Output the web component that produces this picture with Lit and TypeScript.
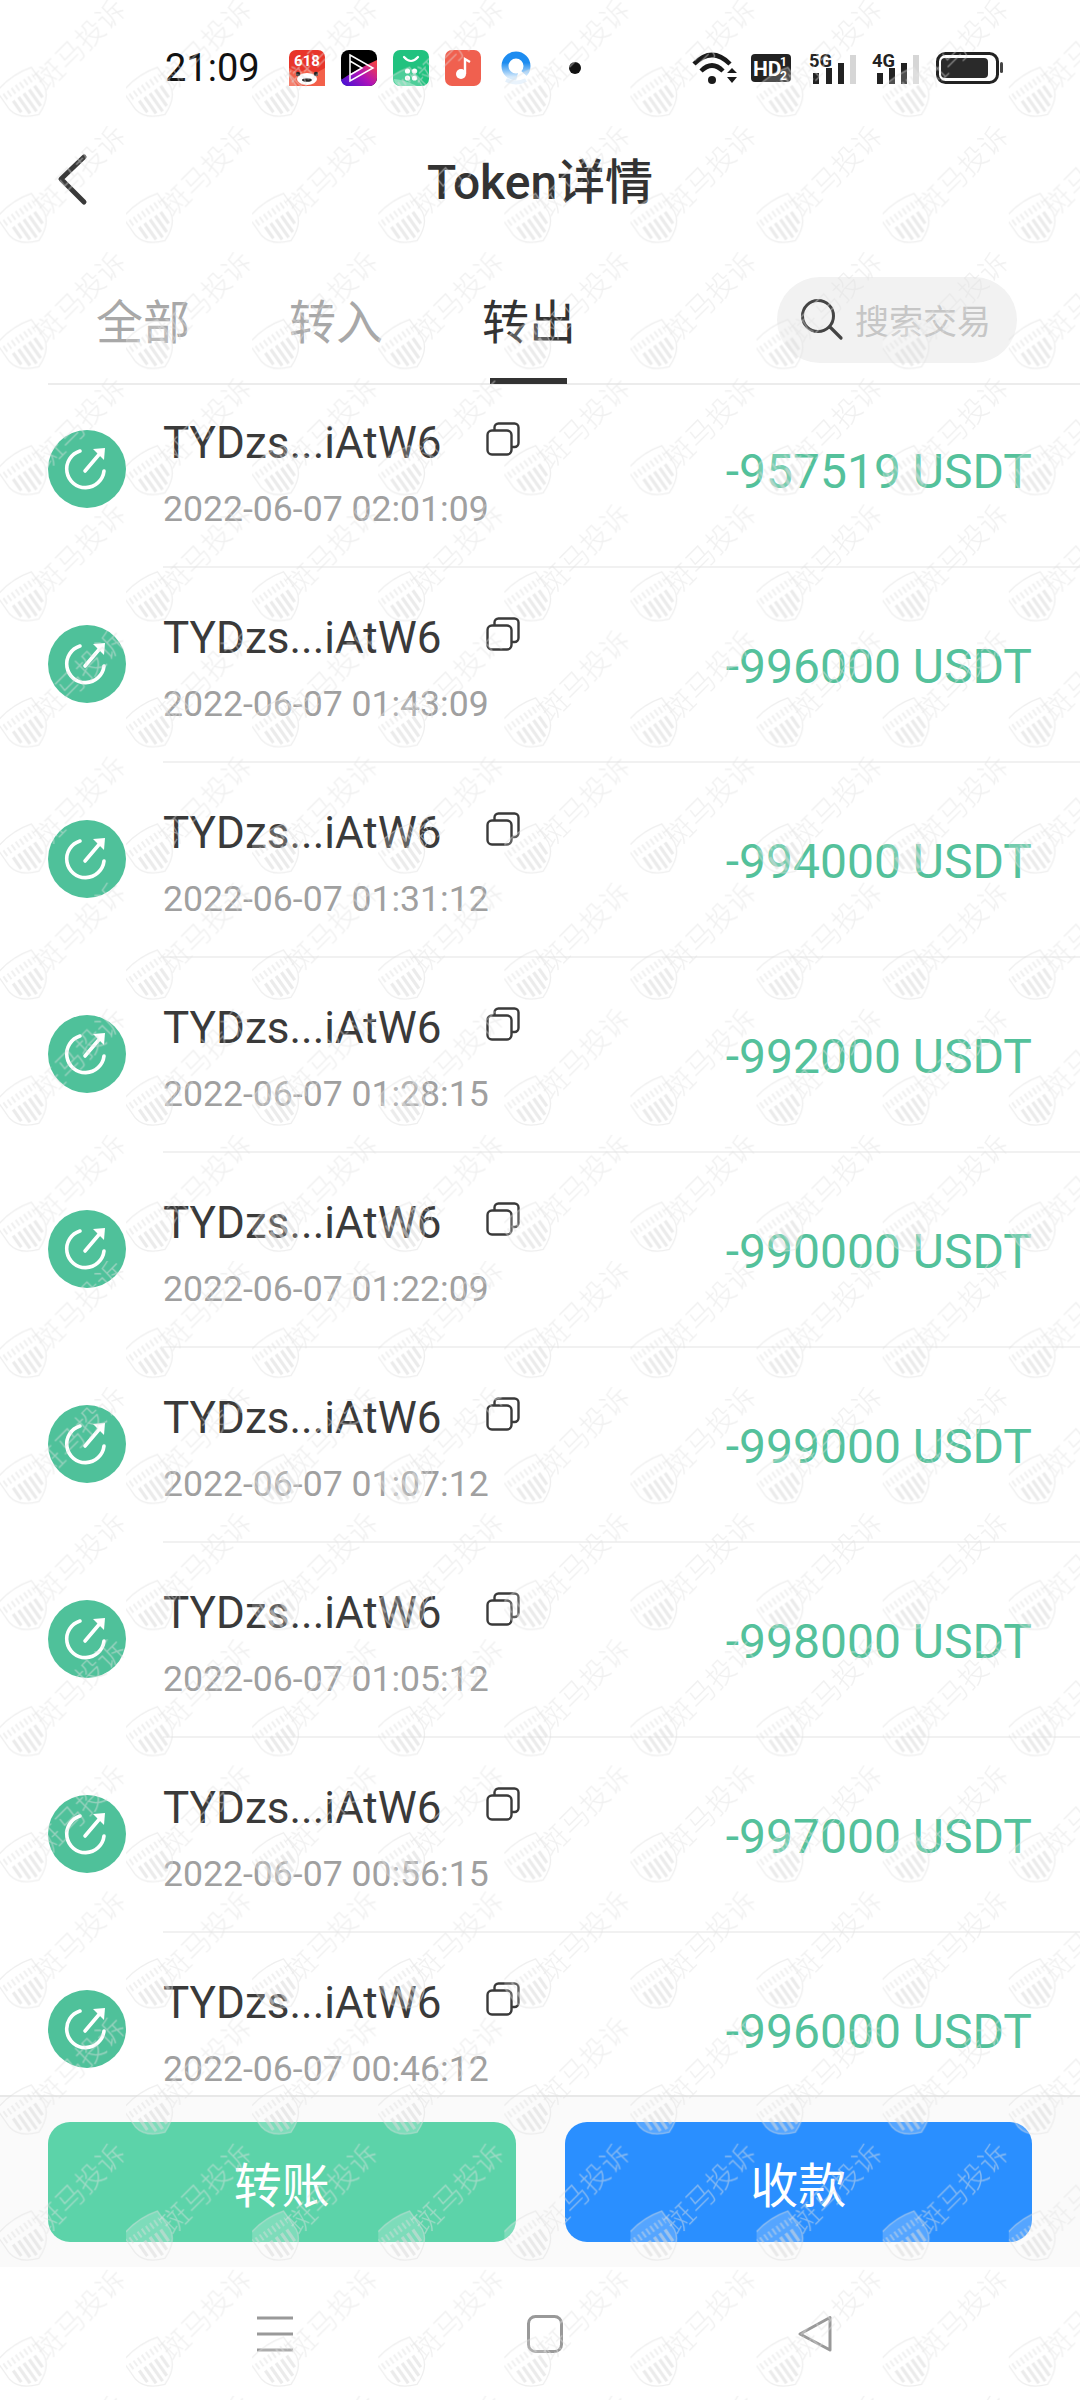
import { LitElement, html, css, svg } from 'lit';
import { customElement, state } from 'lit/decorators.js';

interface TxRow {
  time: string;
  amount: string;
}

const statusApps = svg`
  <svg width="36" height="36" viewBox="0 0 36 36">
    <rect width="36" height="36" rx="7" fill="#e8352a"/>
    <path d="M0 18 L9 23 L18 19 L27 23 L36 18 V36 H0Z" fill="#f3604a"/>
    <text x="18" y="16" text-anchor="middle" font-family="Roboto" font-weight="700" font-size="15" fill="#fff">618</text>
    <ellipse cx="18" cy="29" rx="10" ry="6" fill="#fff"/>
    <ellipse cx="18" cy="30" rx="5" ry="1.800" fill="#222"/>
    <circle cx="9" cy="24" r="2.200" fill="#222"/>
    <circle cx="27" cy="24" r="2.200" fill="#222"/>
  </svg>
  <svg width="36" height="36" viewBox="0 0 36 36">
    <defs>
      <linearGradient id="pl" x1="0" y1="1" x2="1" y2="0.2">
        <stop offset="0" stop-color="#3a12d8"/>
        <stop offset="0.55" stop-color="#b012b8"/>
        <stop offset="1" stop-color="#f0404c"/>
      </linearGradient>
    </defs>
    <rect width="36" height="36" rx="8" fill="#000"/>
    <path d="M0 30 Q14 20 36 10 V28 a8 8 0 0 1 -8 8 H8 a8 8 0 0 1 -8 -6Z" fill="url(#pl)"/>
    <path d="M9 5 L32 18 L9 31Z M9 11 L21 18 L9 25" fill="none" stroke="#fff" stroke-width="1.500"/>
  </svg>
  <svg width="36" height="36" viewBox="0 0 36 36">
    <rect width="36" height="36" rx="7" fill="#21c27f"/>
    <path d="M24 36 H8 a7 7 0 0 1 -7 -7 Q12 30 24 36Z" fill="#6ed9ac"/>
    <path d="M11 7 Q18 15 25 7" fill="none" stroke="#fff" stroke-width="2.200" stroke-linecap="round"/>
    <circle cx="14.500" cy="21" r="2.600" fill="#fff"/><circle cx="21.500" cy="21" r="2.600" fill="#fff"/>
    <circle cx="14.500" cy="28" r="2.600" fill="#fff"/><circle cx="21.500" cy="28" r="2.600" fill="#fff"/>
  </svg>
  <svg width="36" height="36" viewBox="0 0 36 36">
    <rect width="36" height="36" rx="7" fill="#f0604f"/>
    <circle cx="16" cy="24" r="5" fill="#fff"/>
    <path d="M20 24 V9 L25 12" fill="none" stroke="#fff" stroke-width="2.400"/>
  </svg>
  <svg class="q" width="32" height="34" viewBox="0 0 32 34">
    <defs>
      <linearGradient id="qr" x1="0" y1="0" x2="0" y2="1">
        <stop offset="0.35" stop-color="#1d8cf0"/>
        <stop offset="1" stop-color="#d6eafb"/>
      </linearGradient>
    </defs>
    <circle cx="16" cy="15" r="11" fill="none" stroke="url(#qr)" stroke-width="7"/>
    <path d="M19 18 L32 30 H16Z" fill="#fff"/>
    <path d="M6 29 Q16 34 26 29" fill="none" stroke="#e4f0fb" stroke-width="4"/>
  </svg>
`;

const statusRight = svg`
  <svg class="wifi" width="46" height="36" viewBox="0 0 46 36">
    <path d="M2 14 Q20 -4 38 14" fill="none" stroke="#1a1a1a" stroke-width="4.500"/>
    <path d="M9 21 Q20 10 31 21" fill="none" stroke="#1a1a1a" stroke-width="4.500"/>
    <circle cx="20" cy="30" r="4" fill="#1a1a1a"/>
    <path d="M35 23 L40 18 L45 23Z M35 27 L45 27 L40 33Z" fill="#1a1a1a"/>
  </svg>
  <svg class="hd" width="40" height="28" viewBox="0 0 40 28">
    <rect width="40" height="28" rx="4" fill="#222"/>
    <text x="2" y="22" font-family="Roboto" font-weight="700" font-size="21" fill="#fff">HD</text>
    <text x="29" y="12" font-family="Roboto" font-weight="700" font-size="12" fill="#fff">1</text>
    <text x="29" y="26" font-family="Roboto" font-weight="700" font-size="12" fill="#fff">2</text>
  </svg>
  <svg class="five" width="48" height="34" viewBox="0 0 48 34">
    <text x="0" y="16" font-family="Roboto" font-weight="700" font-size="19" textLength="23" lengthAdjust="spacingAndGlyphs" fill="#222">5G</text>
    <rect x="4" y="22" width="6" height="11" fill="#222"/>
    <rect x="17" y="17" width="6" height="16" fill="#222"/>
    <rect x="29" y="12" width="6" height="21" fill="#222"/>
    <rect x="41" y="4" width="6" height="29" fill="#d6d6d6"/>
  </svg>
  <svg class="four" width="48" height="34" viewBox="0 0 48 34">
    <text x="0" y="16" font-family="Roboto" font-weight="700" font-size="19" textLength="23" lengthAdjust="spacingAndGlyphs" fill="#222">4G</text>
    <rect x="5" y="22" width="6" height="11" fill="#222"/>
    <rect x="17" y="17" width="6" height="16" fill="#222"/>
    <rect x="29" y="12" width="6" height="21" fill="#222"/>
    <rect x="41" y="4" width="6" height="29" fill="#d6d6d6"/>
  </svg>
  <svg class="battery" width="68" height="32" viewBox="0 0 68 32">
    <rect x="1.500" y="1.500" width="60" height="29" rx="8" fill="none" stroke="#222" stroke-width="3"/>
    <rect x="5" y="6" width="47" height="20" rx="4" fill="#2a2a2a"/>
    <rect x="64" y="10" width="3" height="11" rx="1.500" fill="#444"/>
  </svg>
`;

const txIcon = svg`
  <svg class="tx-icon" width="78" height="78" viewBox="0 0 78 78">
    <circle cx="39" cy="39" r="39" fill="#4fc19a"/>
    <path d="M32 21 A18.700 18.700 0 1 0 56 41" fill="none" stroke="#fff" stroke-width="3.600" stroke-linecap="round"/>
    <path d="M37 41 L54 21" fill="none" stroke="#fff" stroke-width="3.600" stroke-linecap="round"/>
    <path d="M45 19 L57 18 L56 30Z" fill="#fff"/>
  </svg>
`;

const copyIcon = svg`
  <svg class="copy" width="34" height="34" viewBox="0 0 34 34">
    <rect x="1.500" y="8.500" width="24" height="24" rx="4.500" fill="none" stroke="#3a3a3a" stroke-width="2.400"/>
    <path d="M8.500 8 V5.500 a4 4 0 0 1 4 -4 H28.500 a4 4 0 0 1 4 4 V21 a4 4 0 0 1 -4 4 H26" fill="none" stroke="#3a3a3a" stroke-width="2.400"/>
  </svg>
`;

// the complaint site's stamp, tiled over the whole screenshot
const watermark = svg`
  <svg class="watermark" width="1080" height="2400" viewBox="0 0 1080 2400">
    <defs>
      <pattern id="wm" width="126.100" height="126.100" patternUnits="userSpaceOnUse">
        <g transform="translate(25 95) rotate(-35)">
          <path d="M-21 -19 Q0 -25 21 -19 V3 Q19 17 0 24 Q-19 17 -21 3Z" fill="rgba(255,255,255,.2)" stroke="rgba(222,222,222,.5)" stroke-width="1.300"/>
          <path d="M-18 -10 H18" stroke="rgba(222,222,222,.45)" stroke-width="7" stroke-dasharray="2 3"/>
          <path d="M-13 -2 V12 M-6.500 -2 V18 M0 -2 V20 M6.500 -2 V18 M13 -2 V12" stroke="rgba(218,218,218,.55)" stroke-width="3.200"/>
        </g>
        <text transform="translate(47 92) rotate(-45)" font-family="'Noto Sans CJK SC'" font-weight="300" font-size="28.500" fill="rgba(225,225,225,.5)">斑马投诉</text>
      </pattern>
    </defs>
    <rect width="1080" height="2400" fill="url(#wm)"/>
  </svg>
`;

@customElement('app-root')
export class AppRoot extends LitElement {
  static styles = css`
    :host {
      display: block;
      width: 1080px;
      height: 2400px;
      position: relative;
      overflow: hidden;
      background: #fff;
      font-family: Roboto, 'Noto Sans CJK SC', sans-serif;
      color: #333;
    }
    .page {
      height: 100%;
      display: flex;
      flex-direction: column;
    }
    .status {
      flex: none;
      height: 136px;
      display: flex;
      align-items: center;
      padding: 0 76px 0 165px;
      box-sizing: border-box;
    }
    .time {
      font-size: 38px;
      color: #111;
      width: 124px;
      line-height: 1;
    }
    .apps {
      display: flex;
      align-items: center;
      gap: 16px;
    }
    .apps svg {
      display: block;
    }
    .apps .q {
      margin-left: 3px;
    }
    .dot {
      width: 12px;
      height: 12px;
      border-radius: 50%;
      background: #111;
      margin-left: 37px;
    }
    .sys {
      margin-left: auto;
      display: flex;
      align-items: center;
    }
    .sys svg {
      display: block;
    }
    .sys .hd {
      margin-left: 13px;
    }
    .sys .five {
      margin-left: 18px;
    }
    .sys .four {
      margin-left: 15px;
    }
    .sys .battery {
      margin-left: 16px;
    }
    .header {
      flex: none;
      height: 84px;
      padding-bottom: 40px;
      display: flex;
      align-items: center;
      justify-content: center;
      position: relative;
    }
    .back {
      position: absolute;
      left: 56px;
      top: 17px;
    }
    .title {
      font-size: 48px;
      font-weight: 500;
      color: #333;
    }
    .tabs {
      flex: none;
      height: 125px;
      box-sizing: border-box;
      margin-left: 48px;
      padding: 0 63px 0 48px;
      border-bottom: 2px solid #ececec;
      display: flex;
      align-items: center;
      gap: 99px;
    }
    .tab {
      position: relative;
      font-size: 47px;
      color: #a8a8a8;
      align-self: stretch;
      display: flex;
      align-items: center;
      padding-bottom: 6px;
    }
    .tab.active {
      color: #333;
    }
    .tab.active::after {
      content: '';
      position: absolute;
      left: 8px;
      right: 9px;
      bottom: -1px;
      height: 6px;
      background: #333;
    }
    .search {
      margin-left: auto;
      width: 240px;
      height: 86px;
      margin-bottom: 4px;
      border-radius: 43px;
      background: #f2f2f2;
      display: flex;
      align-items: center;
      box-sizing: border-box;
      padding-left: 22px;
      gap: 10px;
      font-size: 34px;
      color: #c6c6c6;
    }
    .search svg {
      display: block;
      flex: none;
    }
    .list {
      flex: 1;
      min-height: 0;
      overflow: hidden;
      margin-top: -12px;
    }
    .row {
      height: 195px;
      display: flex;
      padding-left: 48px;
    }
    .tx-icon {
      display: block;
      flex: none;
      margin-top: 57px;
    }
    .body {
      flex: 1;
      margin-left: 37px;
      display: flex;
      justify-content: space-between;
      align-items: center;
      padding-top: 8px;
      padding-bottom: 6px;
      box-sizing: border-box;
      border-bottom: 2px solid #f1f1f1;
    }
    .info {
      display: flex;
      flex-direction: column;
      padding-top: 6px;
    }
    .addr-line {
      display: flex;
      align-items: center;
      line-height: 60px;
      font-size: 44px;
      color: #3a3a3a;
    }
    .copy {
      display: block;
      margin-left: 45px;
      margin-top: -8px;
    }
    .date {
      font-size: 35.600px;
      line-height: 50px;
      margin-top: 11px;
      color: #a0a0a0;
    }
    .amount {
      font-size: 48px;
      color: #54c19b;
      margin-right: 48px;
      padding-top: 2px;
    }
    .actions {
      flex: none;
      height: 172px;
      box-sizing: border-box;
      background: #fafafa;
      border-top: 2px solid #e8e8e8;
      padding: 25px 48px 0;
      display: flex;
      gap: 49px;
    }
    .btn {
      flex: 1;
      height: 120px;
      border-radius: 22px;
      display: flex;
      align-items: center;
      justify-content: center;
      color: #fff;
      font-size: 48px;
    }
    .btn.send {
      background: #5cd3a9;
    }
    .btn.receive {
      background: #2a8fff;
    }
    .nav {
      flex: none;
      height: 133px;
      background: #fff;
      display: flex;
      justify-content: center;
      align-items: flex-start;
      padding: 48px 0 0 10px;
      box-sizing: border-box;
    }
    .nav-item {
      flex: 0 0 270px;
      display: flex;
      justify-content: center;
    }
    .nav-item svg {
      display: block;
    }
    .watermark {
      position: absolute;
      left: 0;
      top: 0;
      pointer-events: none;
    }
  `;

  @state()
  private _rows: TxRow[] = [
    { time: '2022-06-07 02:01:09', amount: '-957519 USDT' },
    { time: '2022-06-07 01:43:09', amount: '-996000 USDT' },
    { time: '2022-06-07 01:31:12', amount: '-994000 USDT' },
    { time: '2022-06-07 01:28:15', amount: '-992000 USDT' },
    { time: '2022-06-07 01:22:09', amount: '-990000 USDT' },
    { time: '2022-06-07 01:07:12', amount: '-999000 USDT' },
    { time: '2022-06-07 01:05:12', amount: '-998000 USDT' },
    { time: '2022-06-07 00:56:15', amount: '-997000 USDT' },
    { time: '2022-06-07 00:46:12', amount: '-996000 USDT' },
  ];

  render() {
    return html`
      <div class="page">
        <div class="status">
          <span class="time">21:09</span>
          <div class="apps">${statusApps}</div>
          <span class="dot"></span>
          <div class="sys">${statusRight}</div>
        </div>

        <div class="header">
          <svg class="back" width="34" height="54" viewBox="0 0 34 54">
            <path d="M28 4 L5 26 L28 49" fill="none" stroke="#3a3a3a" stroke-width="5" stroke-linecap="round" stroke-linejoin="round"/>
          </svg>
          <span class="title">Token详情</span>
        </div>

        <div class="tabs">
          <span class="tab">全部</span>
          <span class="tab">转入</span>
          <span class="tab active">转出</span>
          <div class="search">
            <svg width="46" height="46" viewBox="0 0 46 46">
              <circle cx="19" cy="19" r="15.500" fill="none" stroke="#444" stroke-width="3"/>
              <path d="M31 30 L42 41" stroke="#444" stroke-width="3.200" stroke-linecap="round"/>
            </svg>
            <span>搜索交易</span>
          </div>
        </div>

        <div class="list">
          ${this._rows.map(
            (row) => html`
              <div class="row">
                ${txIcon}
                <div class="body">
                  <div class="info">
                    <div class="addr-line"><span>TYDzs...iAtW6</span>${copyIcon}</div>
                    <span class="date">${row.time}</span>
                  </div>
                  <span class="amount">${row.amount}</span>
                </div>
              </div>
            `
          )}
        </div>

        <div class="actions">
          <div class="btn send">转账</div>
          <div class="btn receive">收款</div>
        </div>

        <div class="nav">
          <div class="nav-item">
            <svg width="38" height="38" viewBox="0 0 38 38">
              <path d="M1 3 H37 M1 19 H37 M1 35 H37" stroke="#999" stroke-width="3"/>
            </svg>
          </div>
          <div class="nav-item">
            <svg width="36" height="38" viewBox="0 0 36 38">
              <rect x="1.500" y="1.500" width="33" height="35" rx="7" fill="none" stroke="#999" stroke-width="3"/>
            </svg>
          </div>
          <div class="nav-item">
            <svg width="36" height="38" viewBox="0 0 36 38">
              <path d="M33 2.500 V35 L3 19 Z" fill="none" stroke="#999" stroke-width="3" stroke-linejoin="round"/>
            </svg>
          </div>
        </div>
      </div>
      ${watermark}
    `;
  }
}
